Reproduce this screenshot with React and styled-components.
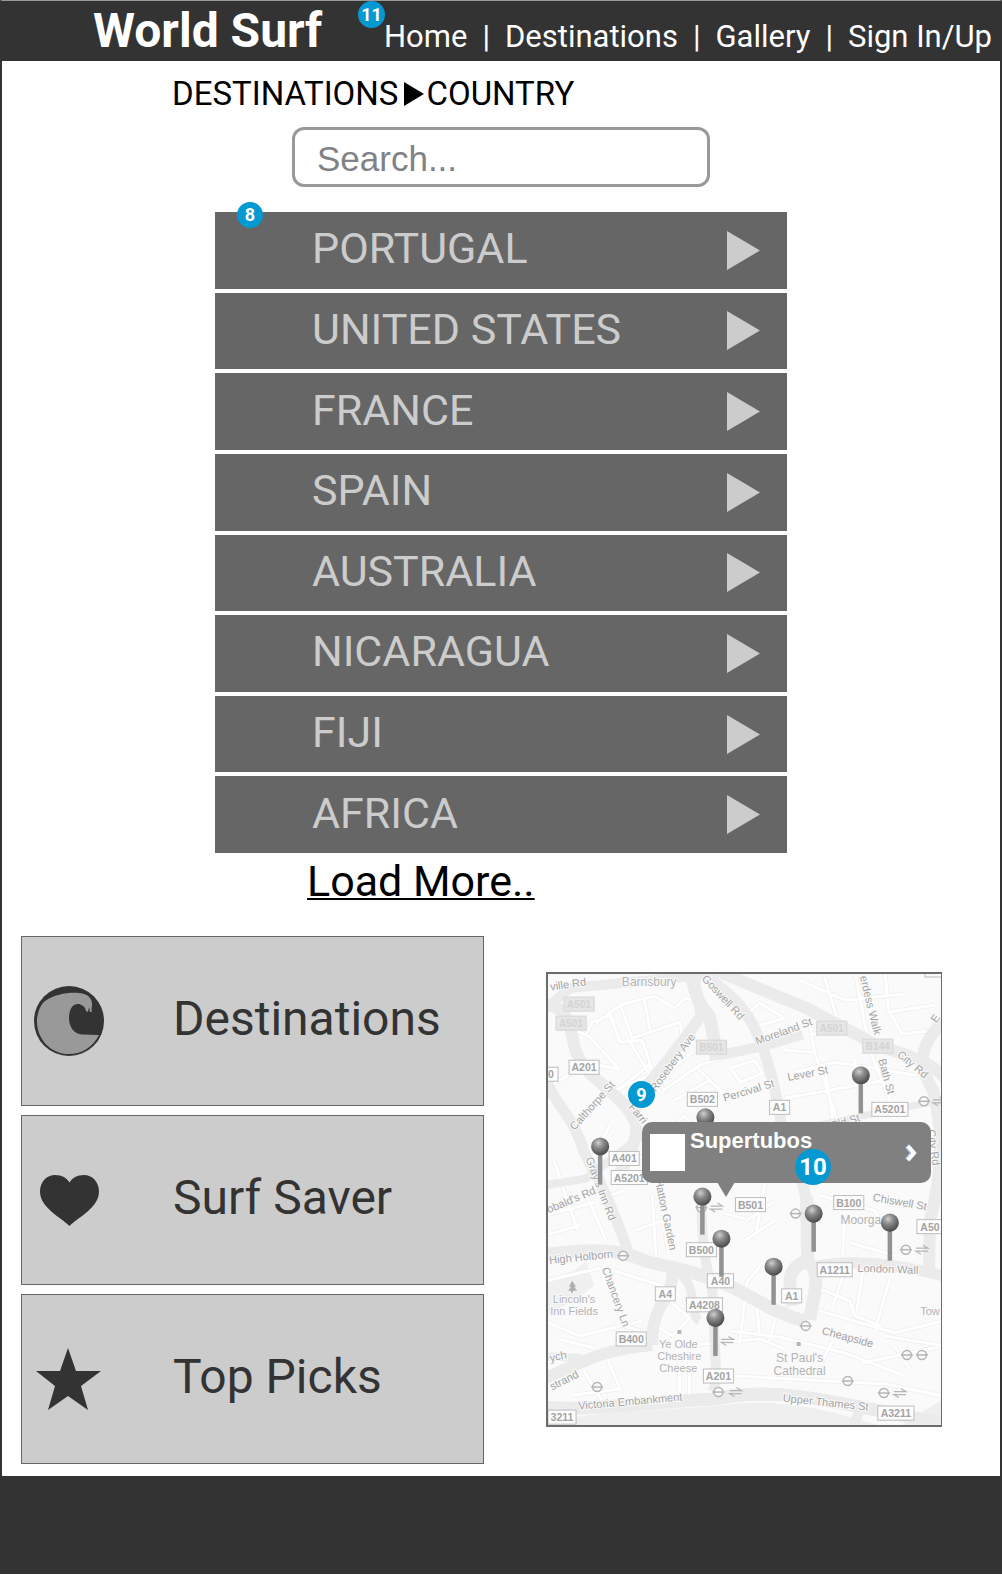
import React from "react";
import styled, { createGlobalStyle } from "styled-components";

const GlobalStyle = createGlobalStyle`
  *, *::before, *::after { box-sizing: border-box; }
  body { margin: 0; background: #fefefe; font-family: Roboto, "Liberation Sans", sans-serif; }
  h1, ul, ol { margin: 0; padding: 0; }
  ul, ol { list-style: none; }
  a { color: inherit; text-decoration: none; }
`;

const Page = styled.div`
  border: solid #333;
  border-width: 1px 2px 0;
  border-top-color: #999;
`;

const Header = styled.header`
  display: flex;
  align-items: baseline;
  justify-content: space-between;
  height: 60px;
  padding: 0 8px 0 91px;
  background: #333;
  color: #fff;
`;

const Brand = styled.h1`
  font-size: 48px;
  line-height: 60px;
  font-weight: 700;
  white-space: nowrap;
`;

const Nav = styled.nav`
  position: relative;
  ul { display: flex; }
  li { font-size: 31px; line-height: 36px; white-space: nowrap; }
  li + li::before { content: "|"; margin: 0 15px; }
`;

const Badge = styled.span`
  position: absolute;
  display: flex;
  align-items: center;
  justify-content: center;
  width: ${(p) => p.$size}px;
  height: ${(p) => p.$size}px;
  top: ${(p) => p.$top};
  left: ${(p) => p.$left};
  border-radius: 50%;
  background: #0499d0;
  color: #fff;
  font-weight: 700;
  font-size: ${(p) => (p.$size > 30 ? 24 : 18)}px;
  line-height: 1;
`;

const Breadcrumb = styled.nav`
  padding: 13px 0 0 170px;
  ol { display: flex; align-items: center; }
  li { font-size: 33px; line-height: 40px; color: #000; }
  svg { display: block; margin: 0 2px 0 6px; }
`;

const SearchForm = styled.form`
  display: flex;
  justify-content: center;
  margin-top: 13px;
`;

const SearchInput = styled.input`
  width: 418px;
  height: 60px;
  padding: 4px 22px 0;
  border: 3px solid #999;
  border-radius: 12px;
  background: #fff;
  font: 35px "Liberation Sans", Arial, sans-serif;
  color: #808285;
  outline: none;
  &::placeholder { color: #808285; opacity: 1; }
`;

const Countries = styled.section`
  position: relative;
  width: 572px;
  margin: 25px auto 0;
`;

const CountryList = styled.ul`
  display: flex;
  flex-direction: column;
  gap: 4px;
  min-height: 641px;
  li { flex: 1; display: flex; }
`;

const CountryLink = styled.a`
  flex: 1;
  display: flex;
  align-items: center;
  justify-content: space-between;
  padding: 0 27px 0 97px;
  background: #666;
  color: #ccc;
  font-size: 43px;
  line-height: 70px;
  span { padding-bottom: 4px; }
  svg { display: block; }
`;

const LoadMore = styled.a`
  display: inline-block;
  margin-left: 92px;
  font-size: 43px;
  line-height: 56px;
  color: #000;
  text-decoration: underline;
  text-decoration-thickness: 2px;
  text-underline-offset: 2px;
`;

const Lower = styled.section`
  display: grid;
  grid-template-columns: 463fr 396fr;
  column-gap: 62px;
  align-items: start;
  padding: 27px 58px 12px 19px;
`;

const Cards = styled.nav`
  display: flex;
  flex-direction: column;
  gap: 9px;
`;

const Card = styled.a`
  display: flex;
  align-items: center;
  height: 170px;
  padding: 0 11px;
  border: 1px solid #666;
  background: #ccc;
  color: #333;
  font-size: 48px;
  line-height: 60px;
  svg { flex: none; width: 72px; margin-right: 68px; }
  span { padding-bottom: 4px; }
`;

const MapPanel = styled.div`
  position: relative;
  margin-top: 36px;
  border: 2px solid #6b6b6b;
  border-right-width: 1px;
  > svg { display: block; width: 100%; height: auto; }
`;

const Callout = styled.a`
  position: absolute;
  top: 148px;
  left: 94px;
  right: 10px;
  display: flex;
  align-items: center;
  height: 61px;
  padding: 0 14px 0 8px;
  border-radius: 10px;
  background: #808080;
  color: #fff;
  &::after {
    content: "";
    position: absolute;
    top: 60px;
    left: 75px;
    border: solid transparent;
    border-width: 15px 9px 0;
    border-top-color: #808080;
  }
`;

const Thumb = styled.span`
  width: 35px;
  height: 37px;
  background: #fff;
`;

const SpotName = styled.span`
  flex: 1;
  align-self: flex-start;
  padding: 5px 0 0 5px;
  font: 700 22px/28px "Liberation Sans", Arial, sans-serif;
`;

const Footer = styled.footer`
  height: 98px;
  background: #333;
`;

const countries = ["PORTUGAL", "UNITED STATES", "FRANCE", "SPAIN", "AUSTRALIA", "NICARAGUA", "FIJI", "AFRICA"];

const WaveIcon = () => (
  <svg viewBox="0 0 72 72" aria-hidden="true">
    <circle cx="36" cy="36" r="35" fill="#333" />
    <path d="M4 34 C5 26 8 19 12 16 C22 9 36 7 46 8 C55 9 59 13 59 19 C59 23 58 25 59 27 L57 27 L56 22 L55 27 L53 26 C52 21 48 19 45 19 C39 19 36 25 36 33 C36 42 41 49 49 49.500 L66 50 C60 62 49 69 36 69 C18 69 3 54 4 34Z" fill="#999" />
  </svg>
);
const HeartIcon = () => (
  <svg viewBox="0 0 72 72" aria-hidden="true">
    <path d="M36.500 62 C29 54 7 44 7 27.500 C7 17.500 14 11 22 11 C29 11 34 14 36.500 18.500 C39 14 44 11 51 11 C59 11 66 17.500 66 27.500 C66 44 44 54 36.500 62Z" fill="#333" />
  </svg>
);
const StarIcon = () => (
  <svg viewBox="0 0 72 72" aria-hidden="true">
    <path d="M35 5 L43 28 L68 28 L48 43 L55 67 L35 53 L15 67 L22 43 L3 28 L27 28Z" fill="#333" />
  </svg>
);

const cards = [
  ["Destinations", WaveIcon],
  ["Surf Saver", HeartIcon],
  ["Top Picks", StarIcon],
];

const mainRoads = [
  ["M0 34 C18 36 25 45 30 75 C38 110 75 118 90 150 C96 158 88 185 74 205", 12],
  ["M0 40 L26 18 L150 6 L156 46 L90 140", 10],
  ["M90 130 L125 88 L160 42", 11],
  ["M145 0 C152 20 150 30 165 46 L172 82", 13],
  ["M148 0 C180 15 205 40 215 70 C228 100 236 145 238 165 C245 190 260 205 262 235", 11],
  ["M170 0 L262 38 L330 74 C360 85 385 90 400 108", 12],
  ["M165 86 C195 82 225 75 258 64", 10],
  ["M400 50 C378 70 370 90 388 120 C398 160 398 200 385 250 L384 298", 12],
  ["M0 105 C10 135 30 145 40 182 L55 210 C66 235 76 255 84 282", 11],
  ["M0 215 L42 208 L98 165", 8],
  ["M260 158 L320 145 L400 129", 7],
  ["M0 284 C45 278 75 278 100 290 C130 298 150 300 185 315 C215 330 235 345 262 350", 13],
  ["M128 296 C130 330 112 325 108 365 L108 374", 12],
  ["M132 300 C155 315 145 345 155 350", 9],
  ["M0 408 C40 390 60 378 108 374", 12],
  ["M0 385 L38 387", 8],
  ["M262 225 L263 290 C238 298 246 318 248 335 M263 290 C278 305 269 320 265 349", 13],
  ["M158 225 C155 260 162 300 168 320 L172 410 L168 420", 10],
  ["M270 296 C310 287 355 294 398 305", 11],
  ["M0 436 C45 440 90 432 170 428 C240 413 300 435 398 452", 13],
  ["M318 430 L308 458", 10],
];

const sideRoads =
  "M52 53 L76 35 L110 26 L130 38 L141 28 L153 32 M42 65 L48 52 L66 45 L76 72 L98 70 L112 112 L148 82 M20 55 L46 67 L75 99 L40 92 M76 35 L88 68 L136 52 L140 85 M100 30 L106 60 M84 69 L106 105 L70 120 M0 120 L40 95 M118 121 L155 95 L195 82 M62 130 L104 95 L120 120 M66 155 L50 185 M110 180 L140 145 L155 165 M186 98 L210 90 L218 103 L196 112 L186 98 M130 130 L165 110 L190 135 M152 97 L176 120 M205 42 L215 33 L240 48 L209 57 M235 63 L240 80 L270 82 L292 148 M270 82 L264 50 M280 8 L296 60 L268 64 M255 10 L300 30 L360 24 M310 0 L325 80 L345 130 M340 0 L344 42 L390 35 M250 102 L290 92 L330 98 L370 105 M240 128 L340 110 M280 95 L288 150 M310 90 L318 150 M345 42 L357 64 L390 60 M10 190 L25 235 L34 260 M0 245 L50 232 M0 265 L35 255 M45 230 L62 270 M65 225 L80 220 M92 185 L112 192 M90 260 L118 250 L125 285 M108 225 L112 292 M60 295 L80 355 L96 360 M2 310 L58 297 M70 300 L128 318 M0 350 L35 365 L98 350 M14 368 L50 377 M62 385 L76 418 L30 424 M40 400 L58 430 M112 345 L125 330 L145 347 L128 365 L112 355 M135 375 L215 368 L240 378 M135 390 L135 425 M145 390 L145 425 M190 405 L340 413 L398 425 M195 375 L202 312 L218 292 M202 250 L228 232 M200 270 L230 250 M180 243 L200 248 M220 215 L212 260 M215 365 L212 330 L245 340 M186 360 L235 366 L300 382 L360 405 M275 318 L305 330 L310 345 L335 355 M300 300 L288 335 M318 300 L312 340 M345 308 L330 360 M275 340 L350 362 L398 350 M288 370 L275 395 M340 365 L398 375 L318 392 M350 376 L365 398 M276 225 L330 240 L345 265 M300 245 L298 285 M305 272 L350 285 M230 350 L225 370";

// [centre x, centre y, text, box width]
const roadLabels = [
  [40, 97, "A201", 30], [7, 104, "0", 14], [158, 129, "B502", 30], [235, 137, "A1", 20],
  [345, 139, "A5201", 36], [80, 188, "A401", 30], [85, 207, "A5201", 36], [206, 234, "B501", 30],
  [304, 232, "B100", 30], [385, 256, "A50", 26], [157, 279, "B500", 30], [176, 310, "A40", 26],
  [121, 323, "A4", 20], [247, 325, "A1", 20], [290, 299, "A1211", 35], [160, 334, "A4208", 36],
  [87, 368, "B400", 30], [174, 405, "A201", 30], [18, 446, "3211", 28], [351, 442, "A3211", 36],
];
const fadedLabels = [
  [35, 34, "A501"], [27, 53, "A501"], [167, 77, "B501"], [287, 58, "A501"], [333, 76, "B144"],
];

const streets = [
  [24, 18, -8, "ville Rd", 11], [105, 16, 0, "Barnsbury", 12], [179, 31, 47, "Goswell Rd", 11],
  [239, 65, -20, "Moreland St", 11], [326, 39, 76, "erdess Walk", 11], [128, 96, -54, "Rosebery Ave", 11],
  [204, 124, -17, "Percival St", 11], [263, 107, -11, "Lever St", 11], [342, 110, 75, "Bath St", 11],
  [368, 98, 40, "City Rd", 11], [48, 139, -48, "Calthorpe St", 11], [94, 147, 50, "Farri", 11],
  [57, 222, 69, "Gray's Inn Rd", 11], [27, 233, -23, "obald's Rd", 11], [122, 248, 78, "Hatton Garden", 11],
  [300, 155, -16, "Old St", 11], [389, 181, 82, "City Rd", 11], [390, 52, -55, "E", 11],
  [355, 235, 10, "Chiswell St", 11], [316, 253, 0, "Moorga", 12], [37, 290, -6, "High Holborn", 11],
  [72, 330, 70, "Chancery Ln", 11], [30, 332, 0, "Lincoln's", 11], [30, 344, 0, "Inn Fields", 11],
  [343, 302, 2, "London Wall", 11], [303, 370, 15, "Cheapside", 11], [385, 344, 0, "Tow", 11],
  [134, 377, 0, "Ye Olde", 11], [135, 389, 0, "Cheshire", 11], [134, 401, 0, "Cheese", 11],
  [255, 391, 0, "St Paul's", 12], [255, 404, 0, "Cathedral", 12], [86, 434, -5, "Victoria Embankment", 11],
  [281, 435, 6, "Upper Thames St", 11], [20, 413, -27, "strand", 11], [14, 389, -12, "ych", 11],
];

const pins = [
  [315, 105], [160, 147], [55, 176], [157, 226], [176, 268], [228, 296], [268, 243], [344, 252], [170, 347],
];
const stations = [
  [379, 131], [79, 285], [251, 243], [157, 237], [361, 279], [261, 355], [377, 384], [362, 384],
  [303, 410], [339, 422], [53, 416], [174, 421],
];
const rails = [[172, 237], [377, 279], [183, 370], [355, 422], [191, 421], [394, 131]];

const StreetMap = () => (
  <svg viewBox="4 4 392 450" role="img" aria-label="Map of surf spots" fontFamily="'Liberation Sans', Arial, sans-serif">
    <defs>
      <radialGradient id="ball" cx="0.4" cy="0.3" r="0.7">
        <stop offset="0" stopColor="#cfcfcf" />
        <stop offset="0.4" stopColor="#8c8c8c" />
        <stop offset="1" stopColor="#4a4a4a" />
      </radialGradient>
    </defs>
    <rect width="400" height="460" fill="#fafafa" />
    <path d="M0 310 L30 300 L42 290 L50 315 L30 330 L0 345Z" fill="#f0f0f0" />
    <path d="M0 452 C60 438 120 440 180 434 C240 426 290 440 345 458 L0 460Z M350 458 L398 428 L398 458Z" fill="#efefef" />
    <path d={sideRoads} fill="none" stroke="#efefef" strokeWidth="4.500" strokeLinejoin="round" />
    <path d={sideRoads} fill="none" stroke="#fff" strokeWidth="3" strokeLinejoin="round" />
    {mainRoads.map(([d, w]) => (
      <path key={d} d={d} fill="none" stroke="#ebebeb" strokeWidth={w} strokeLinejoin="round" />
    ))}
    {streets.map(([x, y, r, t, s], i) => (
      <text key={i} x={x} y={y} transform={`rotate(${r} ${x} ${y - 4})`} textAnchor="middle" fontSize={s}
        fill={r === 0 ? "#b4b4b4" : "#a3a3a3"} stroke="#fafafa" strokeWidth="2" paintOrder="stroke">{t}</text>
    ))}
    {fadedLabels.map(([x, y, t]) => (
      <g key={`${x}-${y}`}>
        <rect x={x - 15} y={y - 7} width="30" height="14" fill="#e6e6e6" stroke="#d6d6d6" />
        <text x={x} y={y + 4} textAnchor="middle" fontSize="10" fontWeight="700" fill="#d4d4d4">{t}</text>
      </g>
    ))}
    {stations.map(([x, y]) => (
      <g key={`${x}-${y}`} fill="none" stroke="#b5b5b5" strokeWidth="1.500">
        <circle cx={x} cy={y} r="4.500" fill="#fafafa" />
        <path d={`M${x - 6} ${y} h12`} />
      </g>
    ))}
    {rails.map(([x, y]) => (
      <path key={`${x}-${y}`} d={`M${x - 6} ${y - 1.5} h12 l-5 -3 M${x + 6} ${y + 1.5} h-12 l5 3`} fill="none" stroke="#b5b5b5" strokeWidth="1.200" />
    ))}
    <path d="M28 310 L32 316 H30 L33 320 H29 V322 H27 V320 H24 L27 316 H25Z" fill="#b0b0b0" />
    <path d="M133 359 h4 v4 h-4Z M252 371 h4 v4 h-4Z" fill="#b5b5b5" />
    <path d="M380 4 V7 H396" fill="none" stroke="#bdbdbd" />
    {roadLabels.map(([x, y, t, w]) => (
      <g key={`${x}-${y}`}>
        <rect x={x - w / 2} y={y - 7} width={w} height="14" fill="#fdfdfd" stroke="#bdbdbd" />
        <text x={x} y={y + 4} textAnchor="middle" fontSize="10.500" fontWeight="700" fill="#a3a3a3">{t}</text>
      </g>
    ))}
    {pins.map(([x, y]) => (
      <g key={`${x}-${y}`}>
        <path d={`M${x + 1} ${y + 6} v32`} stroke="#929292" strokeWidth="4.500" />
        <circle cx={x + 1} cy={y} r="9" fill="url(#ball)" />
      </g>
    ))}
  </svg>
);

export default function App() {
  return (
    <Page>
      <GlobalStyle />
      <Header>
        <Brand>World Surf</Brand>
        <Nav aria-label="Main">
          <ul>
            <li><a href="#home">Home</a></li>
            <li><a href="#destinations">Destinations</a></li>
            <li><a href="#gallery">Gallery</a></li>
            <li><a href="#account">Sign In/Up</a></li>
          </ul>
          <Badge $size={27} $top="-18px" $left="-26px">11</Badge>
        </Nav>
      </Header>

      <main>
        <Breadcrumb aria-label="Breadcrumb">
          <ol>
            <li><a href="#destinations">DESTINATIONS</a></li>
            <li aria-hidden="true"><svg width="20" height="24" viewBox="0 0 20 24"><path d="M0 0 L20 12 L0 24Z" fill="#000" /></svg></li>
            <li>COUNTRY</li>
          </ol>
        </Breadcrumb>

        <SearchForm role="search">
          <SearchInput type="search" placeholder="Search..." aria-label="Search" />
        </SearchForm>

        <Countries>
          <CountryList>
            {countries.map((name) => (
              <li key={name}>
                <CountryLink href={`#${name.toLowerCase().replace(" ", "-")}`}>
                  <span>{name}</span>
                  <svg width="33" height="39" viewBox="0 0 33 39" aria-hidden="true"><path d="M0 0 L33 19.500 L0 39Z" fill="#ccc" /></svg>
                </CountryLink>
              </li>
            ))}
          </CountryList>
          <LoadMore href="#more">Load More..</LoadMore>
          <Badge $size={26} $top="-10px" $left="22px">8</Badge>
        </Countries>

        <Lower>
          <Cards aria-label="Sections">
            {cards.map(([label, Icon]) => (
              <Card key={label} href={`#${label.toLowerCase().replace(" ", "-")}`}>
                <Icon />
                <span>{label}</span>
              </Card>
            ))}
          </Cards>
          <MapPanel>
            <StreetMap />
            <Callout href="#supertubos">
              <Thumb />
              <SpotName>Supertubos</SpotName>
              <svg width="12" height="20" viewBox="0 0 12 20" aria-hidden="true">
                <path d="M2 3 L8 10 L2 17" fill="none" stroke="#a9bdf0" strokeWidth="5" />
                <path d="M3 3 L9 10 L3 17" fill="none" stroke="#fff" strokeWidth="4" />
              </svg>
            </Callout>
            <Badge $size={27} $top="107px" $left="80px">9</Badge>
            <Badge $size={36} $top="175px" $left="247px">10</Badge>
          </MapPanel>
        </Lower>
      </main>
      <Footer />
    </Page>
  );
}
